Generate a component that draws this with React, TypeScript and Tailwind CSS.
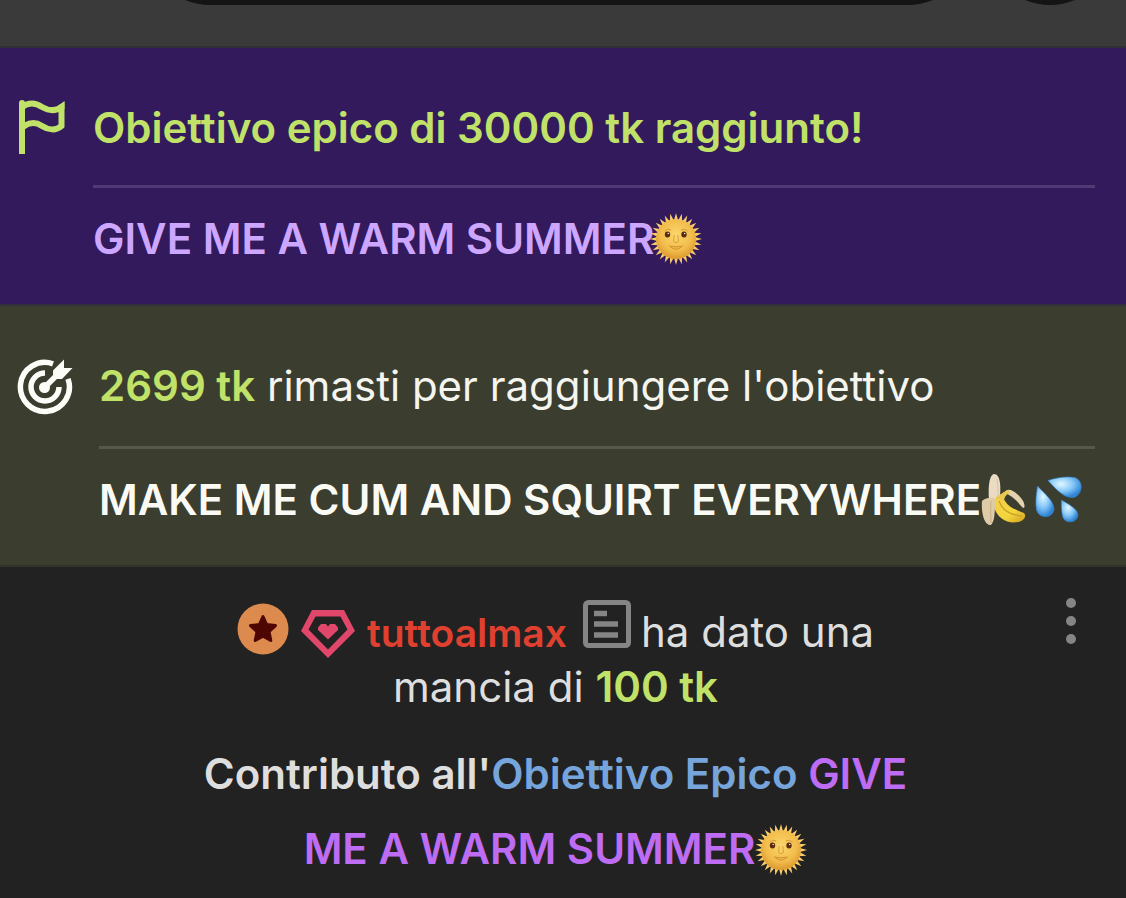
import React from 'react'

interface IconProps {
  className?: string
}

const RAYS = Array.from({ length: 28 }, (_, i) => (i * 360) / 28)

function FlagIcon({ className }: IconProps) {
  return (
    <svg className={className} viewBox="0 0 48 56" fill="none" aria-hidden="true">
      <path d="M1 55V4a3 3 0 0 1 6 0v51z" fill="currentColor" />
      <path
        d="M4 8C11 3 18 4 24 8C31 12 38 12 43.500 8V27C38 32 30 31 24 27C18 23 11 23 5 28"
        stroke="currentColor"
        strokeWidth="6"
      />
      <path d="M40 6.500L46.500 3V10L43 12z" fill="currentColor" />
    </svg>
  )
}

function TargetIcon({ className }: IconProps) {
  return (
    <svg className={className} viewBox="0 0 56 56" fill="none" aria-hidden="true">
      <g stroke="currentColor" strokeWidth="5.500">
        <path d="M36 4.800A24.500 24.500 0 1 0 51 19.800" />
        <path d="M28 14A14 14 0 1 0 42 28" />
      </g>
      <circle cx="27.500" cy="28.500" r="5.500" fill="currentColor" />
      <path d="M27.500 28.500L41 15" stroke="currentColor" strokeWidth="5.500" />
      <path d="M36 20V11.500L47 0.500V9H55.500L45 20z" fill="currentColor" />
    </svg>
  )
}

function SunFace({ className }: IconProps) {
  return (
    <svg className={className} viewBox="0 0 52 52" role="img" aria-label="sole">
      <defs>
        <radialGradient id="sunFill" cx="50%" cy="40%" r="60%">
          <stop offset="0" stopColor="#fbd66c" />
          <stop offset="0.650" stopColor="#f2bd4c" />
          <stop offset="1" stopColor="#dc982f" />
        </radialGradient>
      </defs>
      {RAYS.map((angle) => (
        <path key={angle} d="M23.800 8L26 0L28.200 8z" fill="#f8cc6b" transform={`rotate(${angle} 26 26)`} />
      ))}
      <circle cx="26" cy="26" r="20" fill="url(#sunFill)" />
      <path d="M14.500 18q3-3 6.500-1M31 17q3.500-2 6.500 1" stroke="#d99a35" strokeWidth="1" fill="none" />
      <ellipse cx="17.500" cy="21.500" rx="2.700" ry="2.900" fill="#5b2b0d" />
      <ellipse cx="34" cy="21.500" rx="2.700" ry="2.900" fill="#5b2b0d" />
      <circle cx="18.200" cy="20.500" r="0.700" fill="#fff" />
      <circle cx="34.700" cy="20.500" r="0.700" fill="#fff" />
      <path d="M24.200 22L23.500 28.500q2.500 2.500 5 0L27.800 22" stroke="#dba03a" strokeWidth="1" fill="none" />
      <path d="M19.500 33q6.500 1.500 13 0q-6.500 6.500-13 0z" fill="#efb84b" stroke="#cf8e2e" strokeWidth="0.900" />
    </svg>
  )
}

function Banana({ className }: IconProps) {
  return (
    <svg className={className} viewBox="0 0 46 54" role="img" aria-label="banana">
      <defs>
        <linearGradient id="bananaPeel" x1="0" y1="0" x2="1" y2="1">
          <stop offset="0" stopColor="#f2cf4c" />
          <stop offset="0.600" stopColor="#f3d63d" />
          <stop offset="1" stopColor="#d2a01f" />
        </linearGradient>
      </defs>
      <path d="M8 27C7 15 8 2 13 1C19 1 20 12 19 23L17 29z" fill="#eadbc2" />
      <path d="M16 6C17.500 12 17 19 17 26" stroke="#dac8aa" strokeWidth="1.200" fill="none" />
      <path d="M24 19C26 15 32 17 36 21C41 25 45 31 43 35C40 35 37 27 28 22C26 21 25 20 24 19z" fill="#e5d2af" />
      <path d="M14 26C17 20 22 23 24 28C28 35 36 37 43 40C46 43 43 48 37 49C26 51 16 45 13 34z" fill="url(#bananaPeel)" />
      <path d="M15 25C18 23 22 18 28 17L29 20C25 21 23 25 23 28z" fill="#e9c94f" />
      <path d="M18 28C21 37 29 42 41 43" stroke="#c89e29" strokeWidth="1.200" fill="none" />
      <path d="M1 28C5 24 12 24 15 26C13 34 15 47 10 52C3 53 0 39 1 28z" fill="#dfcba8" />
      <path d="M10 28C9 37 10 44 10 50" stroke="#cbb48d" strokeWidth="1.200" fill="none" />
    </svg>
  )
}

function Drops({ className }: IconProps) {
  return (
    <svg className={className} viewBox="0 0 48 48" role="img" aria-label="gocce">
      <defs>
        <radialGradient id="dropFill" cx="40%" cy="35%" r="65%">
          <stop offset="0" stopColor="#e3f7ff" />
          <stop offset="0.550" stopColor="#85c7f7" />
          <stop offset="1" stopColor="#2f84d6" />
        </radialGradient>
      </defs>
      <g fill="url(#dropFill)" stroke="#3684ce" strokeWidth="0.600">
        <path d="M13 4.500C23 1 34 0 41 2C49 6 47 18 40 21C30 24 21 13 13 4.500z" />
        <path d="M2.500 10C9 17 19 25 19 33C18 43 4 43 1.500 34C0 27 1.500 17 2.500 10z" />
        <path d="M26.500 24C33 28 43 33 43 39C42 48 29 48 27.500 40C26.500 35 26 29 26.500 24z" />
      </g>
    </svg>
  )
}

function StarBadge({ className }: IconProps) {
  return (
    <svg className={className} viewBox="0 0 52 52" aria-hidden="true">
      <circle cx="26" cy="26" r="25.500" fill="#dd8a4f" />
      <path
        d="M26 13.500L29.600 21.600L38.500 22.600L32 28.600L33.800 37.500L26 33.100L18.200 37.500L20 28.600L13.500 22.600L22.400 21.600z"
        fill="#4f0703"
        stroke="#4f0703"
        strokeWidth="3"
        strokeLinejoin="round"
      />
    </svg>
  )
}

function GemBadge({ className }: IconProps) {
  return (
    <svg className={className} viewBox="0 0 54 50" aria-hidden="true">
      <path
        fillRule="evenodd"
        d="M11 1H43L54 22L27 49L0 22zM14.500 7.500L7.500 20.500L27 40.500L46.500 20.500L39.500 7.500z"
        fill="#e0476a"
      />
      <path d="M17 18.500L20 15H25L27 17.500L29 15H34L37 18.500V21L27 30.500L17 21z" fill="#e0476a" />
    </svg>
  )
}

function NoteIcon({ className }: IconProps) {
  return (
    <svg className={className} viewBox="0 0 48 48" fill="none" aria-hidden="true">
      <rect x="2.500" y="2.500" width="43" height="43" rx="3" stroke="currentColor" strokeWidth="5" />
      <path d="M11 13.500H24M11 24H35M11 35H35" stroke="currentColor" strokeWidth="5.500" />
    </svg>
  )
}

function TopBar() {
  return (
    <header className="flex h-12 gap-3 overflow-hidden border-b-2 border-[#302e36] bg-[#3a3a3a] pl-[145px] pr-[11px]">
      <div className="-mt-[125px] h-[130px] flex-1 rounded-full bg-[#141414]" />
      <div className="-mt-[125px] h-[130px] w-[130px] rounded-full bg-[#141414]" />
    </header>
  )
}

function EpicGoal() {
  return (
    <section className="flex gap-[27px] border-b-2 border-[#33303a] bg-[#321a5c] pb-10 pl-[18px] pr-[31px] pt-[55px]">
      <FlagIcon className="-mt-1 h-14 w-12 shrink-0 text-[#c0e268]" />
      <div className="min-w-0 flex-1 font-semibold leading-[50px]">
        <h2 className="border-b-[3px] border-[#4f3a74] pb-8 text-[#c0e268]">
          Obiettivo epico di 30000 tk raggiunto!
        </h2>
        <p className="flex items-center pt-[26px] text-[#cda6ff]">
          GIVE ME A WARM SUMMER
          <SunFace className="-my-1 -ml-1 h-[52px] w-[52px] shrink-0" />
        </p>
      </div>
    </section>
  )
}

function CurrentGoal() {
  return (
    <section className="flex gap-[26px] border-b-2 border-[#333429] bg-[#3b3d2f] pb-10 pl-[17px] pr-[31px] pt-[55px]">
      <TargetIcon className="-mt-0.5 h-14 w-14 shrink-0 text-[#fdfdf8]" />
      <div className="min-w-0 flex-1 leading-[50px]">
        <h2 className="border-b-[3px] border-[#56584a] pb-[35px] font-normal text-[#f5f5f0]">
          <strong className="font-semibold text-[#c0e268]">2699 tk</strong> rimasti per raggiungere l'obiettivo
        </h2>
        <p className="flex items-center whitespace-nowrap pt-[26px] font-semibold text-[#fafaf5]">
          MAKE ME CUM AND SQUIRT EVERYWHERE
          <Banana className="-my-1 h-[54px] w-[46px] shrink-0" />
          <Drops className="ml-2 h-12 w-12 shrink-0" />
        </p>
      </div>
    </section>
  )
}

function TipMessage() {
  return (
    <article className="flex flex-1 items-start pl-[54px] pr-[41px]">
      <div className="min-w-0 flex-1 text-center text-[#dedede]">
        <p className="pt-[37px] leading-[55px]">
          <StarBadge className="-mt-3 mr-3 inline-block h-[52px] w-[52px] align-[-8px]" />
          <GemBadge className="-mt-3 mr-3 inline-block h-[50px] w-[54px] align-[-12px]" />
          <a href="#tuttoalmax" className="text-[39px] font-semibold leading-[50px] text-[#e0402f]">
            tuttoalmax
          </a>
          <button type="button" aria-label="Nota utente" className="-mt-4 ml-4 mr-[10px] align-[-1px] text-[#858585]">
            <NoteIcon className="block h-12 w-12" />
          </button>
          ha dato una
          <br />
          mancia di <strong className="font-semibold text-[#c0e268]">100 tk</strong>
        </p>
        <p className="pt-[22px] font-semibold leading-[75px]">
          Contributo all'<span className="text-[#76a5dc]">Obiettivo Epico</span>{' '}
          <span className="text-[#bd6cf3]">
            GIVE
            <br />
            ME A WARM SUMMER
          </span>
          <SunFace className="inline-block h-[52px] w-[52px] align-[-12px]" />
        </p>
      </div>
      <button type="button" aria-label="Altre opzioni" className="mt-[31px] flex w-7 flex-col items-center gap-2">
        <span className="h-[10px] w-[10px] rounded-full bg-[#858585]" />
        <span className="h-[10px] w-[10px] rounded-full bg-[#858585]" />
        <span className="h-[10px] w-[10px] rounded-full bg-[#858585]" />
      </button>
    </article>
  )
}

export default function App() {
  return (
    <main className="flex min-h-screen flex-col bg-[#222222] font-[Inter,sans-serif] text-[42px]">
      <TopBar />
      <EpicGoal />
      <CurrentGoal />
      <TipMessage />
    </main>
  )
}
